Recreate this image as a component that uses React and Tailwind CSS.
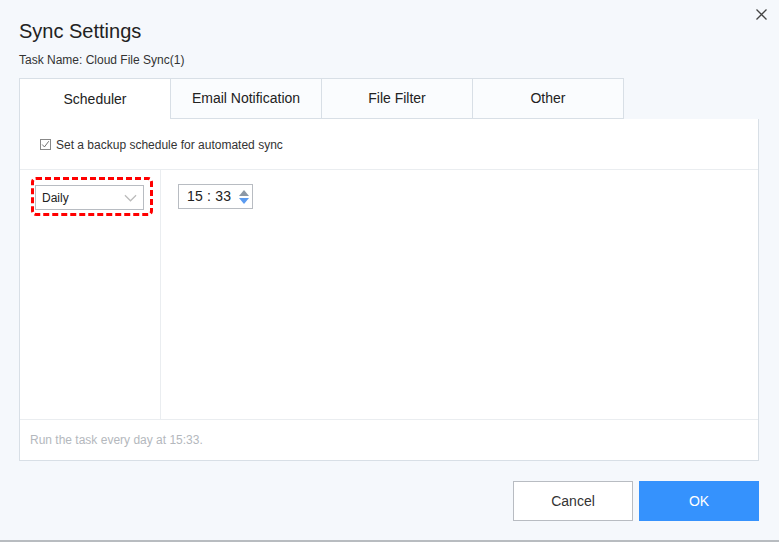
import { useState } from 'react';

// Pestañas del diálogo
const tabs = ['Scheduler', 'Email Notification', 'File Filter', 'Other'];

function App() {
  const [activo, setActivo] = useState(0);

  return (
    <div
      className="relative w-[779px] h-[542px] bg-[#f5f8fc] flex flex-col overflow-hidden"
      style={{ fontFamily: '"Liberation Sans", Arial, sans-serif' }}
    >
      {/* Botón de cerrar */}
      <button className="absolute right-[12px] top-[9px] w-[11px] h-[11px] text-[#444]">
        <svg viewBox="0 0 11 11" width="11" height="11">
          <path d="M0.5 0.5 L10.5 10.5 M10.5 0.5 L0.5 10.5" stroke="currentColor" strokeWidth="1.3" />
        </svg>
      </button>

      <div className="px-[19px] pt-[20px] flex flex-col flex-1">
        <h1 className="text-[20px] leading-[23px] text-[#222]">Sync Settings</h1>
        <p className="mt-[10px] text-[12px] leading-[14px] text-[#333]">Task Name: Cloud File Sync(1)</p>

        {/* Pestañas */}
        <div className="mt-[11px] flex">
          {tabs.map((t, i) => (
            <button
              key={t}
              onClick={() => setActivo(i)}
              className={
                'h-[41px] text-[14px] text-[#222] border-t border-r border-[#d8dfe6] ' +
                (i === 0 ? 'w-[152px] border-l ' : 'w-[151px] ') +
                (i === activo ? 'bg-white' : 'bg-[#fafcfe] border-b')
              }
            >
              {t}
            </button>
          ))}
        </div>

        {/* Panel del programador */}
        <div className="w-[740px] h-[342px] bg-white border-l border-r border-b border-[#d8dfe6] flex flex-col">
          <div className="h-[51px] border-b border-[#eaedf0] flex items-center pl-[20px] pt-[1px]">
            <span className="w-[11px] h-[11px] border border-[#888] flex items-center justify-center">
              <svg viewBox="0 0 11 11" width="9" height="9">
                <path d="M1.5 5.5 L4.2 8.5 L9.5 1.5" fill="none" stroke="#555" strokeWidth="1" />
              </svg>
            </span>
            <span className="ml-[5px] text-[12px] text-[#333]">Set a backup schedule for automated sync</span>
          </div>

          <div className="flex flex-1">
            <div className="w-[141px] border-r border-[#eaedf0] pl-[11px] pt-[7px]">
              <div className="w-[122px] h-[39px] border-[3px] border-dashed border-[#ff0000] rounded-[5px] pl-[1px] pt-[5px]">
                <div className="w-[109px] h-[25px] border border-[#b8bcc2] flex items-center justify-between px-[6px]">
                  <span className="text-[12px] text-[#222]">Daily</span>
                  <svg viewBox="0 0 14 8" width="13" height="8">
                    <path d="M1 1 L7 7 L13 1" fill="none" stroke="#bbb" strokeWidth="1.3" />
                  </svg>
                </div>
              </div>
            </div>
            <div className="flex-1 pl-[17px] pt-[14px]">
              <div className="w-[75px] h-[25px] border border-[#b8bcc2] flex items-center pl-[8px]">
                <span className="text-[14px] text-[#222] tracking-[0.2px]">15 : 33</span>
                <svg viewBox="0 0 12 16" width="12" height="16" className="ml-[7px]">
                  <path d="M6 1 L11 7 L1 7 Z" fill="#8c98a6" />
                  <path d="M1 9 L11 9 L6 15 Z" fill="#5b9bf0" />
                </svg>
              </div>
            </div>
          </div>

          <div className="h-[41px] border-t border-[#eaedf0] flex items-center pl-[10px]">
            <span className="text-[12px] text-[#b4b8bd]">Run the task every day at 15:33.</span>
          </div>
        </div>

        {/* Botones */}
        <div className="mt-[20px] flex justify-end gap-[6px] pr-[1px]">
          <button className="w-[120px] h-[40px] bg-white border border-[#b8bcc2] text-[14px] text-[#333]">
            Cancel
          </button>
          <button className="w-[120px] h-[40px] bg-[#3592fd] text-[14px] text-white">OK</button>
        </div>
      </div>

      <div className="h-[2px] bg-[#b8bcc0]" />
    </div>
  );
}

export default App;
